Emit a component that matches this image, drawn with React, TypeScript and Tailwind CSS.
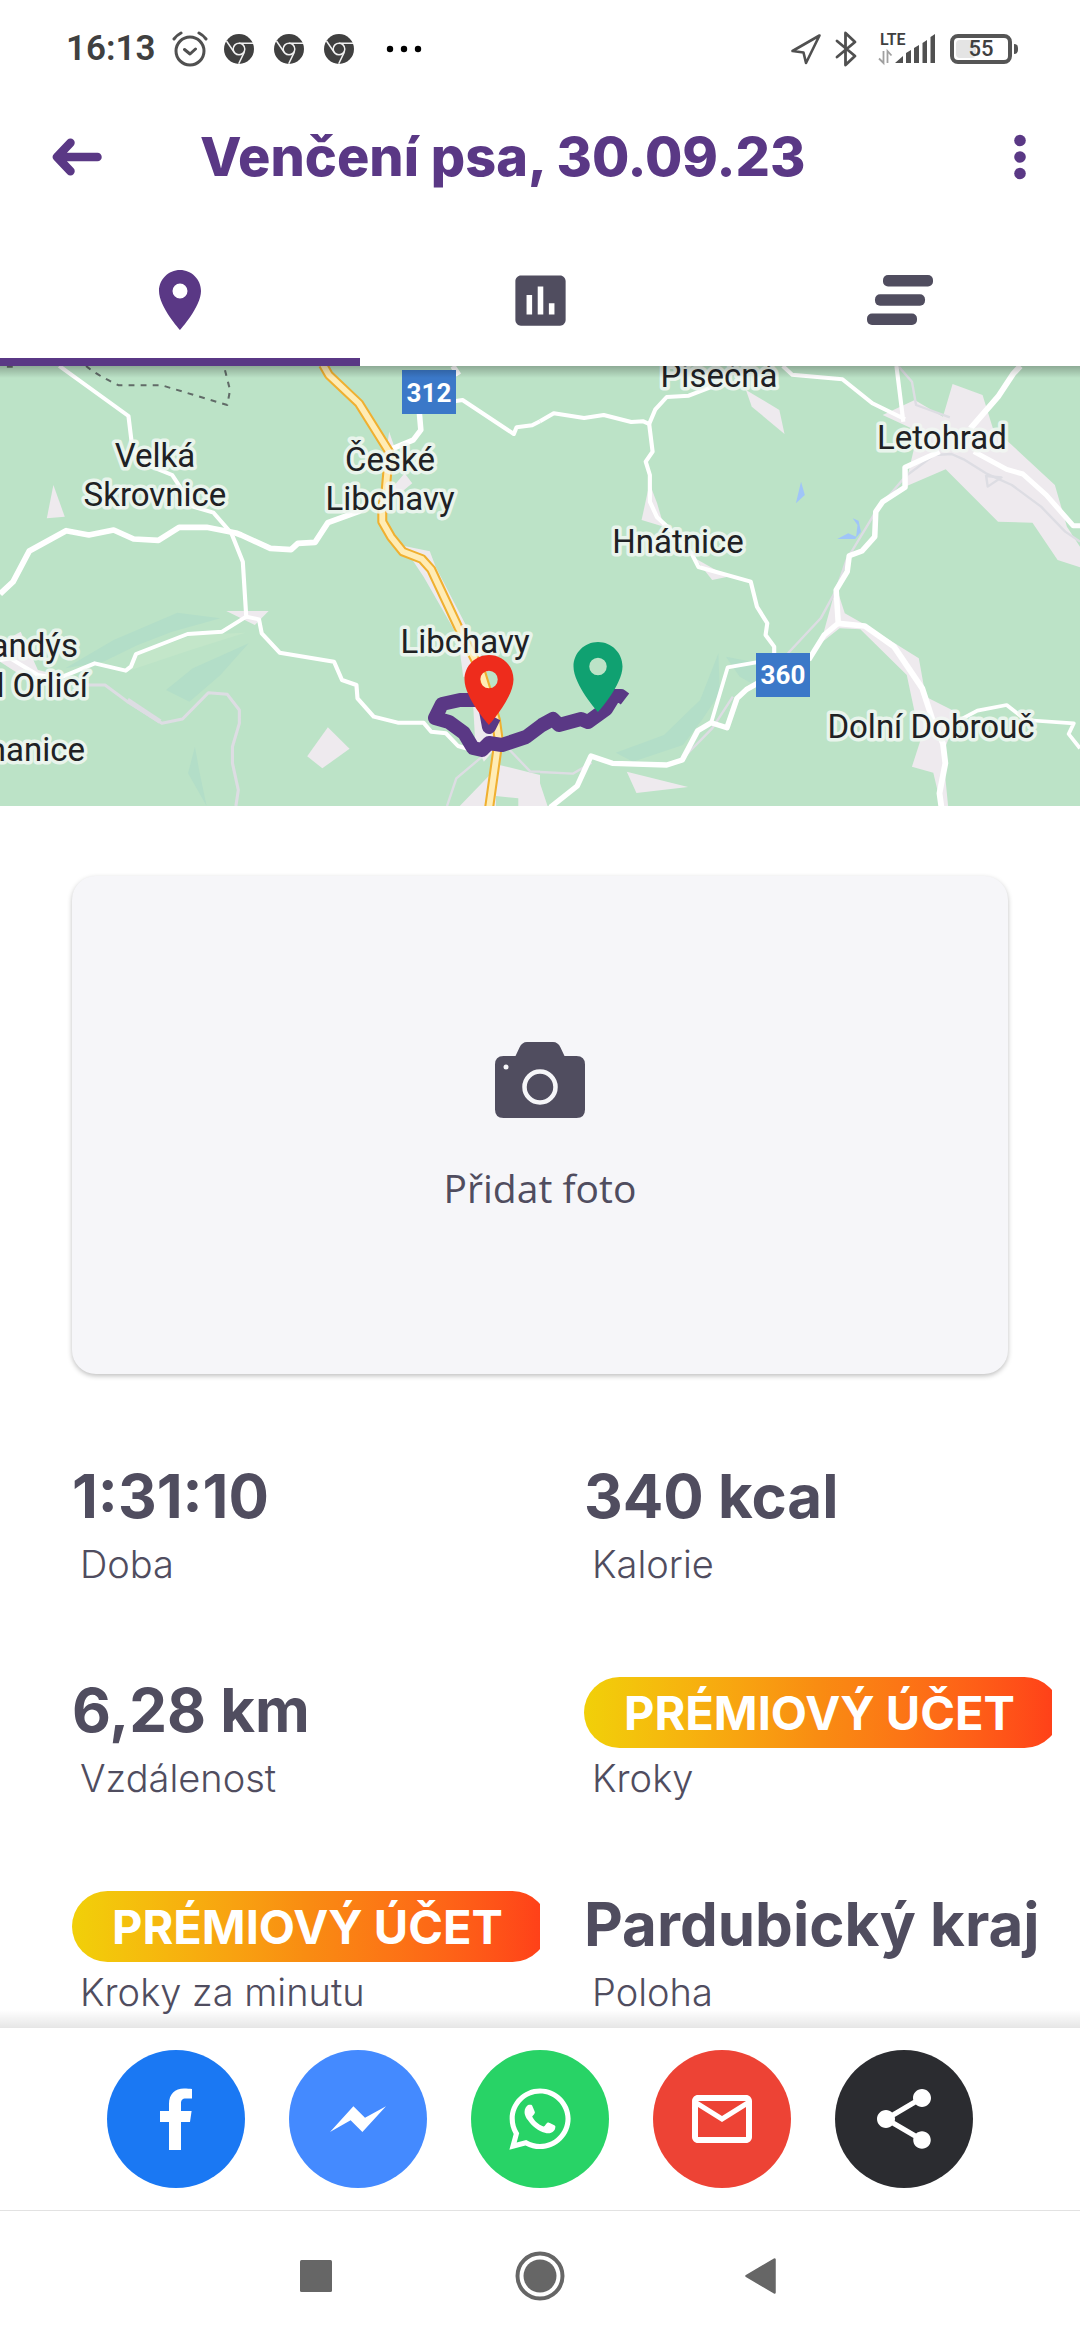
import React, { useState } from 'react';
import { FaWhatsapp } from 'react-icons/fa';
import { MdAssessment, MdMailOutline, MdPlace, MdShare } from 'react-icons/md';

type Tab = 'map' | 'charts' | 'splits';

const ChromeIcon: React.FC = () => (
  <svg viewBox="0 0 30 30" className="w-[30px] h-[30px]">
    <circle cx="15" cy="15" r="15" fill="#404040" />
    <g fill="none" stroke="#f1f1f1" strokeWidth="1.5">
      <circle cx="15" cy="15" r="5.8" />
      <path d="M15 9.2H29M2.5 7l7.5 11M20.3 18.2l-5.6 11.6" />
    </g>
  </svg>
);

const StatusBar: React.FC = () => (
  <div className="flex h-20 items-center justify-between pt-[18px] pl-[66px] pr-[62px] text-[#404040]">
    <div className="flex items-center">
      <span className="text-[35px] leading-10 font-semibold">16:13</span>
      <svg viewBox="0 0 36 36" className="ml-4 w-9 h-9" fill="none" stroke="#505050" strokeWidth="3" strokeLinecap="round" strokeLinejoin="round">
        <circle cx="18" cy="20" r="14" />
        <path d="M12.500 18.500l5.500 4.500l5.500-5M2 8q3-4 7-6M34 8q-3-4-7-6" />
      </svg>
      <div className="ml-4 flex gap-5">
        <ChromeIcon />
        <ChromeIcon />
        <ChromeIcon />
      </div>
      <svg viewBox="0 0 36 8" className="ml-8 w-9 h-2">
        <circle cx="4" cy="4" r="3.200" fill="#000" />
        <circle cx="18" cy="4" r="3.200" fill="#000" />
        <circle cx="32" cy="4" r="3.200" fill="#000" />
      </svg>
    </div>
    <div className="flex items-center">
      <svg viewBox="0 0 32 32" className="w-8 h-8" fill="none" stroke="#505050" strokeWidth="2.600" strokeLinejoin="round">
        <path d="M29.500 2.500L2.500 18l11 1.500L16 30z" />
      </svg>
      <svg viewBox="0 0 24 36" className="ml-3 w-6 h-9" fill="none" stroke="#505050" strokeWidth="2.800" strokeLinejoin="round" strokeLinecap="round">
        <path d="M3 10l18 15-9.500 9V2L21 11 3 26" />
      </svg>
      <svg viewBox="0 0 60 34" className="ml-5 w-[60px] h-[34px] overflow-visible">
        <text x="2" y="13" fontSize="16" fontWeight="600" fill="#404040">LTE</text>
        <path d="M5.500 19v12L1 26.500M9.500 31V19l4 4.500" fill="none" stroke="#a0a0a0" strokeWidth="1.800" />
        <path d="M17 31l8-7v7zM28 31V21l5-3v13zM36 31V16l5-3v18zM44.500 31V11l4.500-3v23zM52.500 31V5l4.500-3v29z" fill="#505050" />
      </svg>
      <div className="ml-3 flex items-center gap-0.5">
        <div className="relative flex h-[30px] w-[62px] items-center justify-center rounded-lg border-4 border-[#555555] text-[22px] leading-6 font-medium">
          <div className="absolute left-0.5 top-0.5 bottom-0.5 w-5 rounded-sm bg-[#e4e4e4]" />
          <span className="relative">55</span>
        </div>
        <div className="h-2.5 w-1 rounded-r bg-[#555555]" />
      </div>
    </div>
  </div>
);

const Header: React.FC = () => (
  <header className="flex h-[154px] items-center pl-[52px] pr-12 text-[#5a3885]">
    <button aria-label="Zpět">
      <svg viewBox="0 0 50 38" className="w-[50px] h-[38px]" fill="none" stroke="currentColor" strokeWidth="8.500" strokeLinecap="round" strokeLinejoin="round">
        <path d="M18.500 4.800L5 19l13.500 14.200M6 19h39.500" />
        <path d="M6 19l9-9v18z" fill="currentColor" stroke="none" />
      </svg>
    </button>
    <h1 className="ml-[98px] flex-1 whitespace-nowrap font-[Inter] text-[54px] leading-[64px] font-extrabold">Venčení psa, 30.09.23</h1>
    <button aria-label="Další možnosti">
      <svg viewBox="0 0 24 48" className="w-6 h-12" fill="currentColor">
        <circle cx="12" cy="7.500" r="5.800" />
        <circle cx="12" cy="24" r="5.800" />
        <circle cx="12" cy="40.500" r="5.800" />
      </svg>
    </button>
  </header>
);

const SplitsIcon: React.FC = () => (
  <svg viewBox="0 0 66 50" className="w-[66px] h-[50px]" fill="currentColor">
    <rect x="16" width="50" height="11.500" rx="5" />
    <rect x="8" y="19.300" width="50" height="11.500" rx="5" />
    <rect y="38.500" width="50" height="11.500" rx="5" />
  </svg>
);

const tabs: { id: Tab; label: string; icon: React.ReactNode }[] = [
  { id: 'map', label: 'Mapa', icon: <MdPlace size={72} /> },
  { id: 'charts', label: 'Grafy', icon: <MdAssessment size={67} /> },
  { id: 'splits', label: 'Úseky', icon: <SplitsIcon /> },
];

const TabBar: React.FC<{ active: Tab; onChange: (tab: Tab) => void }> = ({ active, onChange }) => (
  <nav className="grid h-[132px] grid-cols-3">
    {tabs.map((tab) => (
      <button
        key={tab.id}
        aria-label={tab.label}
        onClick={() => onChange(tab.id)}
        className={`flex items-center justify-center border-b-8 pt-2 ${active === tab.id ? 'border-[#5a3885] text-[#5a3885]' : 'border-transparent text-[#504d5f]'}`}
      >
        {tab.icon}
      </button>
    ))}
  </nav>
);

const places = [
  { name: 'Velká', x: 155, y: 101 },
  { name: 'Skrovnice', x: 155, y: 140 },
  { name: 'České', x: 390, y: 105 },
  { name: 'Libchavy', x: 390, y: 144 },
  { name: 'Libchavy', x: 465, y: 287 },
  { name: 'Písečná', x: 719, y: 21 },
  { name: 'Letohrad', x: 942, y: 83 },
  { name: 'Hnátnice', x: 678, y: 187 },
  { name: 'Dolní Dobrouč', x: 931, y: 372 },
];

// Labels that run off the left edge of the map
const edgePlaces = [
  { name: 'Brandýs', x: 78, y: 291 },
  { name: 'nad Orlicí', x: 88, y: 331 },
  { name: 'Heřmanice', x: 85, y: 395 },
];

const pinPath =
  'M12 2C8.130 2 5 5.130 5 9c0 5.250 7 13 7 13s7-7.750 7-13c0-3.870-3.130-7-7-7zm0 9.500a2.500 2.500 0 0 1 0-5 2.500 2.500 0 0 1 0 5z';

const RouteMap: React.FC = () => (
  <section className="relative h-[440px] overflow-hidden bg-[#bce3c7]">
    <svg viewBox="0 0 1080 440" preserveAspectRatio="xMidYMid slice" className="h-full w-full" role="img" aria-label="Mapa trasy">
      {/* West tile */}
      <g transform="scale(.34439 .33333) translate(0 -18)" fill="none" strokeLinejoin="round">
        <g fill="#b3dec8">
          <path d="M190 925L330 840L515 758L640 775L500 815L400 855L300 905z" />
          <path d="M482 990L560 925L722 850L640 945L550 1025z" />
          <path d="M566 1160L546 1240L600 1338L580 1240z" />
        </g>
        <path d="M400 885L560 825L712 818L560 868L380 930z" fill="#c3e6c9" />
        <g fill="#eeeaee">
          <path d="M155 375L136 475L188 470z" />
          <path d="M657 753H780L740 795z" />
          <path d="M952 1102L1015 1166L936 1225L892 1189z" />
          <path d="M1130 215L1145 260L1120 290zM1125 400L1175 340L1197 370L1150 410z" />
          <path d="M1170 557L1248 574L1265 620L1420 930L1380 960L1345 950L1330 830L1230 650z" />
          <path d="M0 850L60 815L110 930L150 940L90 965L0 905z" />
          <path d="M1370 960L1435 1000L1460 1140L1405 1205L1380 1150z" />
          <path d="M1335 1338L1450 1215L1568 1245V1338H1505V1315L1440 1308V1338z" />
        </g>
        <g stroke="#dddde3" strokeWidth="9">
          <path d="M250 975H305L370 1025L470 1090L530 1077L605 998L660 1003L695 1050V1090L675 1160V1210L692 1290L685 1338" />
          <path d="M370 1020L465 1085" strokeWidth="14" />
          <path d="M1400 1190L1325 1255L1298 1338M1480 1170L1540 1235H1568" strokeWidth="7" />
        </g>
        <g stroke="#616b68" strokeWidth="6" strokeDasharray="17 18">
          <path d="M250 18Q280 45 345 76H470L660 135L668 90L650 18M20 20H45" />
        </g>
        <g stroke="#fff" strokeWidth="12">
          <path d="M172 18L373 168L385 270L440 320L500 345L560 440L620 458L672 520L705 605L715 770L645 815L545 822L395 882L380 920L365 932L275 910L170 955L110 945L30 895L0 900" />
          <path d="M0 702L38 665L85 573L192 512L258 525L330 510L388 537L460 541L520 502H600L685 519L700 525L785 565L845 569L865 550L915 547L952 488L1040 455L1110 400" strokeWidth="17" />
          <path d="M1315 18L1332 45M1217 150L1222 210L1200 240L1130 270" strokeWidth="16" />
          <path d="M1310 125L1343 120L1492 222L1500 202L1545 196L1568 184" />
          <path d="M715 770L752 778L760 820L812 878L970 905L993 960L1035 975L1038 1015L1085 1070L1155 1088H1230L1252 1115L1295 1120L1330 1158L1370 1170" />
        </g>
        <path d="M938 14L955 45L1042 130L1130 275L1120 390L1110 440V485L1135 530L1170 575L1225 597L1252 628L1330 800L1395 930L1440 1080L1448 1140L1420 1345" stroke="#f0b030" strokeWidth="29" />
        <path d="M938 14L955 45L1042 130L1130 275L1120 390L1110 440V485L1135 530L1170 575L1225 597L1252 628L1330 800L1395 930L1440 1080L1448 1140L1420 1345" stroke="#ffecb5" strokeWidth="17" />
      </g>

      {/* East tile */}
      <g transform="translate(540 0) scale(.34439 .33333) translate(0 -18)" fill="none" strokeLinejoin="round">
        <g fill="#b3dec8">
          <path d="M518 880L522 1000L470 1080L415 1155L270 1205L220 1178L360 1125L465 1020z" />
          <path d="M540 890L640 910V985L580 950z" />
        </g>
        <g fill="#eeeaee">
          <path d="M598 90L695 150L710 222L615 140z" />
          <path d="M318 370L295 480L360 500L340 430z" />
          <path d="M450 595L545 650L500 660z" />
          <path d="M995 165L1088 120L1170 170L1198 72L1285 105L1315 205L1370 255L1495 375L1530 500L1568 560V622L1503 600L1430 488L1330 485L1178 328L1060 380L1085 270L1100 215z" />
          <path d="M860 680L885 760L940 792L1100 895L1120 1010L1215 1060L1170 1180L1185 1338H1165L1142 1238L1080 1220L1105 1140L1065 945L930 808L870 805L815 850z" />
          <path d="M252 1235L430 1281L280 1299zM0 1270L22 1338H0z" />
        </g>
        <g fill="#a0c5f8">
          <path d="M758 365L769 405L743 430zM863 537L895 520L918 530L922 495L908 475L925 482L932 515L915 537z" />
        </g>
        <g stroke="#dddde3" strokeWidth="7">
          <path d="M720 880L815 775L860 690L890 600L975 455L1060 350L1145 285L1195 282L1230 298L1295 340L1370 375L1455 440L1525 515L1568 545" />
          <path d="M1295 345L1300 380L1340 352L1295 348M1042 20L1080 65L1092 135L1190 172" />
          <path d="M0 1236L95 1241L150 1208M410 1200L500 1105L560 1010" />
        </g>
        <g stroke="#fff" strokeWidth="12">
          <path d="M0 184L40 160L128 174L185 165L265 186L300 184L317 192L335 148L368 111L432 107L500 80" />
          <path d="M317 192L327 275L307 305L319 345V425L340 472L370 500L440 580L460 621L612 665L630 740L660 790L655 825L680 860V885" />
          <path d="M705 18L732 44L878 58L965 130L1060 178M1035 18L1055 185" />
          <path d="M1395 18L1375 40L1330 110L1250 205" strokeWidth="17" />
          <path d="M1260 275L1355 328L1402 342L1470 405L1548 497H1568" strokeWidth="15" />
          <path d="M1160 275L1060 322V382L995 425L975 455L972 530L935 573L898 587L892 635L860 690L866 790L825 825L780 900" strokeWidth="16" />
          <path d="M866 790L943 798L1028 860L1110 985L1140 1080L1170 1150L1177 1210L1160 1300L1166 1345" strokeWidth="17" />
          <path d="M640 965L600 988L572 1015L543 1103L497 1088L458 1112L413 1200L368 1215L210 1210L148 1188L108 1278L30 1342" strokeWidth="16" />
          <path d="M640 905L545 922L497 1088M1200 1090L1270 1052L1355 1035L1410 1080L1550 1090L1535 1122L1568 1165" strokeWidth="11" />
        </g>
      </g>

      {/* Recorded route */}
      <path
        d="M494 351L489 361L484 334H460L442 338L435 352L449 356L464 367L473 382L482 384L489 377L502 379L526 371L542 359L553 353L559 359L581 353L588 356L606 343L614 330H621L625 333"
        fill="none"
        stroke="#5a3885"
        strokeWidth="14"
        strokeLinejoin="round"
      />

      <g fontFamily="Roboto, sans-serif" fontSize="33" fill="#202124" stroke="#f2f8f3" strokeWidth="7" strokeOpacity=".85" strokeLinejoin="round" className="[paint-order:stroke]">
        {places.map((place) => (
          <text key={`${place.name}-${place.y}`} x={place.x} y={place.y} textAnchor="middle">{place.name}</text>
        ))}
        {edgePlaces.map((place) => (
          <text key={place.name} x={place.x} y={place.y} textAnchor="end">{place.name}</text>
        ))}
      </g>

      <g fill="#3b78c8">
        <rect x="402" y="4" width="54" height="44" />
        <rect x="756" y="287" width="54" height="44" />
      </g>
      <g fontFamily="Roboto, sans-serif" fontSize="26" fontWeight="700" fill="#fff" textAnchor="middle">
        <text x="429" y="36">312</text>
        <text x="783" y="318">360</text>
      </g>

      <path d={pinPath} transform="translate(447 282) scale(3.500)" fill="#ee2c1c" />
      <path d={pinPath} transform="translate(556 269) scale(3.500)" fill="#10a171" />
    </svg>
    <div className="absolute inset-x-0 top-0 h-3 bg-linear-to-b from-black/25 to-transparent" />
  </section>
);

const AddPhoto: React.FC = () => (
  <button className="mx-[72px] mt-[70px] flex h-[498px] flex-col items-center rounded-3xl bg-[#f6f6f9] pt-[166px] text-[#504d5f] shadow-[0_2px_5px_rgba(0,0,0,0.25)]">
    <svg viewBox="0 0 90 76" className="h-[76px] w-[90px]">
      <path d="M8.500 14H20.500L24.500 5.500Q27 0 32 0H58Q63 0 65.500 5.500L69.500 14H81.500Q90 14 90 22.500V67.500Q90 76 81.500 76H8.500Q0 76 0 67.500V22.500Q0 14 8.500 14z" fill="currentColor" />
      <circle cx="45" cy="45" r="15.500" fill="none" stroke="#f6f6f9" strokeWidth="4.500" />
      <circle cx="11" cy="25" r="2.500" fill="#f6f6f9" />
    </svg>
    <span className="mt-10 font-['Open_Sans'] text-[39px] leading-[60px]">Přidat foto</span>
  </button>
);

const PremiumBadge: React.FC = () => (
  <button className="h-[71px] w-[476px] shrink-0 rounded-full bg-linear-to-r from-[#f1d009] via-[#f98b12] to-[#ff3d19] pl-10 text-left text-[47px] leading-[70px] font-bold text-white">
    PRÉMIOVÝ ÚČET
  </button>
);

const stats: { label: string; value?: string }[] = [
  { label: 'Doba', value: '1:31:10' },
  { label: 'Kalorie', value: '340 kcal' },
  { label: 'Vzdálenost', value: '6,28 km' },
  { label: 'Kroky' },
  { label: 'Kroky za minutu' },
  { label: 'Poloha', value: 'Pardubický kraj' },
];

const Stats: React.FC = () => (
  <dl className="mt-[89px] grid grid-cols-2 gap-x-11 gap-y-[84px] pl-[72px] pr-7 font-[Inter] text-[#504d5f]">
    {stats.map((stat) => (
      <div key={stat.label} className="flex flex-col-reverse overflow-hidden">
        <dt className="pl-2 text-[38px] leading-[58px] font-light">{stat.label}</dt>
        <dd className="flex h-[72px] text-[60px] leading-[66px] font-bold whitespace-nowrap">
          {stat.value ?? <PremiumBadge />}
        </dd>
      </div>
    ))}
  </dl>
);

const circle = 'flex h-[138px] w-[138px] items-center justify-center rounded-full text-white';

const ShareBar: React.FC = () => (
  <div className="relative flex h-[182px] items-center justify-center gap-11 bg-white">
    <div className="absolute inset-x-0 -top-[18px] h-[18px] bg-linear-to-b from-transparent to-black/10" />
    <button aria-label="Facebook" className={`${circle} bg-[#1a78f3]`}>
      <svg viewBox="0 0 138 138" fill="currentColor">
        <path d="M62 100V72H53V61H62V54C62 44 68 38.500 77 38.500C80 38.500 83 38.700 85 39V48.500H79C75 48.500 74 50.500 74 53.500V61H84.600L83 72H74V100z" />
      </svg>
    </button>
    <button aria-label="Messenger" className={`${circle} bg-[#448aff]`}>
      <svg viewBox="0 0 138 138" fill="currentColor">
        <path d="M41 82L64.400 56.300L76 67.700L97 56.300L73.400 82L61.600 70.300z" />
      </svg>
    </button>
    <button aria-label="WhatsApp" className={`${circle} bg-[#28d366]`}>
      <FaWhatsapp size={70} />
    </button>
    <button aria-label="E-mail" className={`${circle} bg-[#ed4335]`}>
      <MdMailOutline size={72} />
    </button>
    <button aria-label="Sdílet" className={`${circle} bg-[#2b2c30]`}>
      <MdShare size={72} />
    </button>
  </div>
);

const SystemNav: React.FC = () => (
  <div className="flex h-[130px] items-center justify-center gap-[173px] border-t border-[#e2e2e2] bg-white text-[#666666]">
    <button aria-label="Poslední aplikace">
      <svg viewBox="0 0 50 50" className="w-[50px] h-[50px]" fill="currentColor">
        <rect x="8" y="9" width="32" height="32" rx="1.500" />
      </svg>
    </button>
    <button aria-label="Domů">
      <svg viewBox="0 0 50 50" className="w-[50px] h-[50px]">
        <circle cx="25" cy="25" r="22.500" fill="none" stroke="currentColor" strokeWidth="4" />
        <circle cx="25" cy="25" r="16.500" fill="currentColor" />
      </svg>
    </button>
    <button aria-label="Zpět v systému">
      <svg viewBox="0 0 50 50" className="w-[50px] h-[50px]" fill="currentColor" stroke="currentColor" strokeWidth="2.500" strokeLinejoin="round">
        <path d="M8.500 25L36.500 8.500V41.500z" />
      </svg>
    </button>
  </div>
);

const App: React.FC = () => {
  const [tab, setTab] = useState<Tab>('map');

  return (
    <div className="flex min-h-screen flex-col bg-white font-[Roboto,sans-serif]">
      <StatusBar />
      <Header />
      <TabBar active={tab} onChange={setTab} />
      <main className="flex flex-1 flex-col">
        <RouteMap />
        <AddPhoto />
        <Stats />
      </main>
      <footer className="sticky bottom-0">
        <ShareBar />
        <SystemNav />
      </footer>
    </div>
  );
};

export default App;
